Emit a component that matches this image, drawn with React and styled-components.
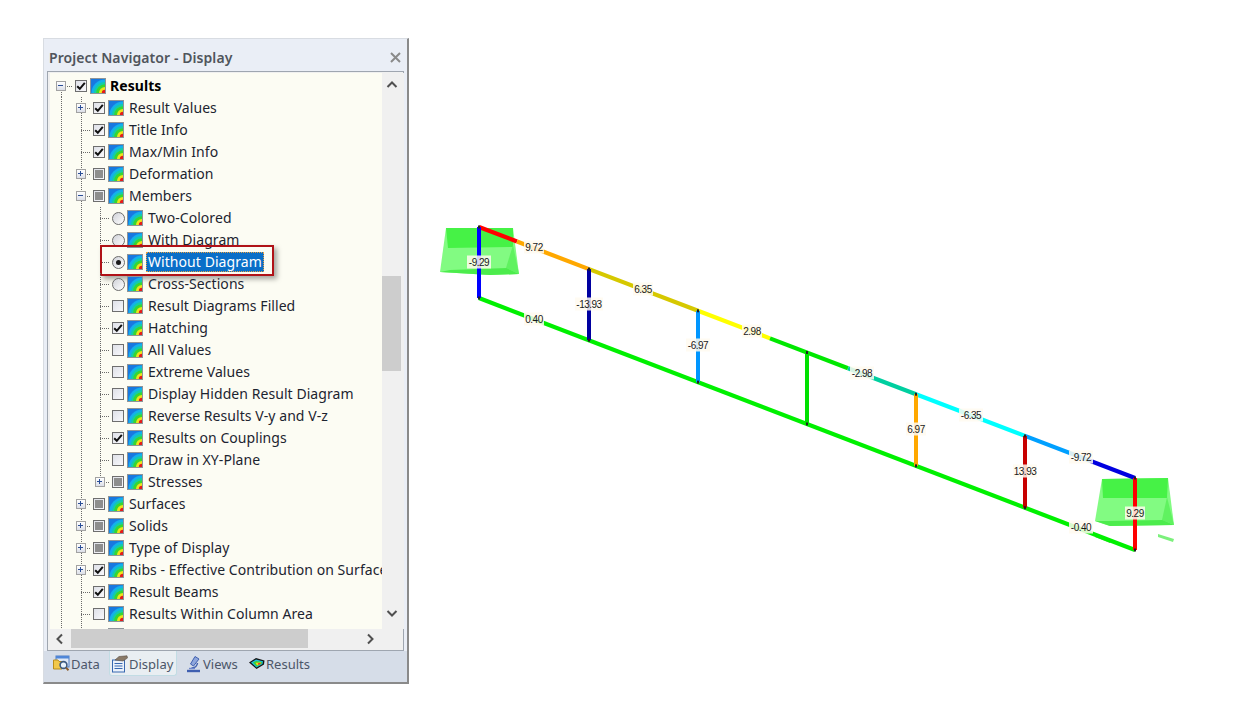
import React from 'react';
import styled, { createGlobalStyle } from 'styled-components';

const GlobalStyle = createGlobalStyle`
  html, body {
    margin: 0;
    padding: 0;
    background: #fff;
  }
`;

const rows = [
  { label: 'Results', level: 0, box: 'on', exp: 'minus', bold: true },
  { label: 'Result Values', level: 1, box: 'on', exp: 'plus' },
  { label: 'Title Info', level: 1, box: 'on' },
  { label: 'Max/Min Info', level: 1, box: 'on' },
  { label: 'Deformation', level: 1, box: 'mixed', exp: 'plus' },
  { label: 'Members', level: 1, box: 'mixed', exp: 'minus' },
  { label: 'Two-Colored', level: 2, box: 'radio' },
  { label: 'With Diagram', level: 2, box: 'radio' },
  { label: 'Without Diagram', level: 2, box: 'radioOn', selected: true },
  { label: 'Cross-Sections', level: 2, box: 'radio' },
  { label: 'Result Diagrams Filled', level: 2, box: 'off' },
  { label: 'Hatching', level: 2, box: 'on' },
  { label: 'All Values', level: 2, box: 'off' },
  { label: 'Extreme Values', level: 2, box: 'off' },
  { label: 'Display Hidden Result Diagram', level: 2, box: 'off' },
  { label: 'Reverse Results V-y and V-z', level: 2, box: 'off' },
  { label: 'Results on Couplings', level: 2, box: 'on' },
  { label: 'Draw in XY-Plane', level: 2, box: 'off' },
  { label: 'Stresses', level: 2, box: 'mixed', exp: 'plus', last: true },
  { label: 'Surfaces', level: 1, box: 'mixed', exp: 'plus' },
  { label: 'Solids', level: 1, box: 'mixed', exp: 'plus' },
  { label: 'Type of Display', level: 1, box: 'mixed', exp: 'plus' },
  { label: 'Ribs - Effective Contribution on Surfaces', level: 1, box: 'on', exp: 'plus' },
  { label: 'Result Beams', level: 1, box: 'on' },
  { label: 'Results Within Column Area', level: 1, box: 'off' },
  { label: '', level: 1, box: 'off' },
];

// top chord pieces, x from / x to / colour
const topChord = [
  [479, 517, '#ff0000'],
  [517, 589, '#ffa800'],
  [589, 698, '#d6c800'],
  [698, 770, '#ffff00'],
  [770, 848, '#00e800'],
  [848, 916, '#00cfa0'],
  [916, 1025, '#00ffff'],
  [1025, 1090, '#00a0ff'],
  [1090, 1135, '#0000e0'],
];

const posts = [
  [479, '#0000ff'],
  [589, '#0000a0'],
  [698, '#0096ff'],
  [807, '#00e000'],
  [916, '#ffa800'],
  [1025, '#c80000'],
  [1135, '#ff0000'],
];

const values = [
  ['9.72', 534, 247],
  ['6.35', 643, 289],
  ['2.98', 752, 331],
  ['-2.98', 862, 373],
  ['-6.35', 971, 415],
  ['-9.72', 1081, 457],
  ['-9.29', 479, 262],
  ['-13.93', 589, 304],
  ['-6.97', 698, 345],
  ['6.97', 916, 429],
  ['13.93', 1025, 471],
  ['9.29', 1135, 513],
  ['0.40', 534, 319],
  ['-0.40', 1081, 527],
];

const topY = (x) => 227 + (x - 479) * (251 / 656);
const bottomY = (x) => 298 + (x - 479) * (252 / 656);

function ResultIcon() {
  return (
    <IconBox viewBox="0 0 16 16">
      <rect width="16" height="16" fill="#1878e0" />
      <circle cx="15" cy="15" r="13.5" fill="#14b0ec" />
      <circle cx="15" cy="15" r="11" fill="#14cca8" />
      <circle cx="15" cy="15" r="8.8" fill="#38d630" />
      <circle cx="15" cy="15" r="6" fill="#ece41c" />
      <circle cx="15" cy="15" r="3.2" fill="#e41c1c" />
      <rect x="0.5" y="0.5" width="15" height="15" fill="none" stroke="#8e9498" />
    </IconBox>
  );
}

function Toggle({ box }) {
  if (box === 'radio') return <Radio />;
  if (box === 'radioOn') return <Radio><RadioDot /></Radio>;
  return (
    <Check>
      {box === 'mixed' && <CheckFill />}
      {box === 'on' && (
        <svg width="10" height="10" viewBox="0 0 10 10">
          <path d="M1.2 5.2 L3.8 7.8 L8.8 1.8" fill="none" stroke="#111" strokeWidth="2" />
        </svg>
      )}
    </Check>
  );
}

function Expander({ kind, at }) {
  return (
    <ExpBox $at={at}>
      <svg width="8" height="8" viewBox="0 0 8 8">
        <path d="M1 3.5 H6" stroke="#2b4f97" strokeWidth="1" fill="none" />
        {kind === 'plus' && <path d="M3.5 1 V6" stroke="#2b4f97" strokeWidth="1" fill="none" />}
      </svg>
    </ExpBox>
  );
}

function TreeRow({ row }) {
  const { label, level, box, exp, bold, selected, last } = row;
  return (
    <Row>
      {level === 0 && (
        <Branch $w={25} $at={11} $from="center">
          {exp && <Expander kind={exp} at={11} />}
        </Branch>
      )}
      {level === 1 && <Guide $w={17} $at={11} />}
      {level === 1 && (
        <Branch $w={26} $at={14}>
          {exp && <Expander kind={exp} at={14} />}
        </Branch>
      )}
      {level === 2 && <Guide $w={17} $at={11} />}
      {level === 2 && <Guide $w={20} $at={14} />}
      {level === 2 && (
        <Branch $w={25} $at={13} $from={last ? 'end' : undefined}>
          {exp && <Expander kind={exp} at={13} />}
        </Branch>
      )}
      <Toggle box={box} />
      <ResultIcon />
      <Label $bold={bold} $selected={selected}>{label}</Label>
      {selected && <Callout />}
    </Row>
  );
}

function Chevron({ d }) {
  return (
    <svg width="12" height="12" viewBox="0 0 12 12">
      <path d={d} fill="none" stroke="#505050" strokeWidth="2" />
    </svg>
  );
}

function DataIcon() {
  return (
    <TabGlyph width="18" height="18" viewBox="0 0 18 18">
      <rect x="3" y="1" width="13" height="11" fill="#dfe8f6" stroke="#4f7fc4" />
      <rect x="3" y="1" width="13" height="2.5" fill="#4f86d8" />
      <path d="M0.5 5 H5 L6 6.5 H9 V14 H0.5 Z" fill="#f2c84a" stroke="#b98d1c" />
      <circle cx="10.5" cy="10" r="3.4" fill="#e8f2fb" stroke="#3d5a80" strokeWidth="1.6" />
      <path d="M13 12.6 L15.5 15.2" stroke="#8a5a2a" strokeWidth="2" />
    </TabGlyph>
  );
}

function DisplayIcon() {
  return (
    <TabGlyph width="18" height="18" viewBox="0 0 18 18">
      <rect x="1.5" y="5" width="12" height="12" fill="#eaf1fb" stroke="#3868b0" />
      <path d="M3.5 8.5 H11.5 M3.5 11 H11.5 M3.5 13.5 H11.5" stroke="#3868b0" />
      <path d="M4 5 L8 1.5 L16 0.8 L16.5 3 L12 6 Z" fill="#8a7a68" stroke="#5a5048" strokeWidth="0.6" />
    </TabGlyph>
  );
}

function ViewsIcon() {
  return (
    <TabGlyph width="18" height="18" viewBox="-1 0 18 18">
      <path d="M9 1.5 L13 4 L7.5 11 L4.5 9 Z" fill="#8ea6dc" stroke="#3f5fb0" />
      <path d="M5.5 13 C8 13 11 11.5 11.5 8" fill="none" stroke="#3f5fb0" strokeWidth="1.5" />
      <path d="M1 16 H14" stroke="#3f5fb0" strokeWidth="2.4" />
      <path d="M3 13.5 H9" stroke="#6f88cc" strokeWidth="1.4" />
    </TabGlyph>
  );
}

function ResultsIcon() {
  return (
    <TabGlyph width="18" height="18" viewBox="0 0 18 18">
      <path d="M1 7.5 L8 3 L16.5 5.5 L16 9.5 L8.5 14 Z" fill="#141414" />
      <path d="M3 7.5 L8 4.5 L15 6.2 L14.5 9 L8.5 12.4 Z" fill="#1cc0e0" />
      <path d="M5 7.6 L8.2 6 L14 7 L13.6 8.8 L8.6 11.4 Z" fill="#38d038" />
      <path d="M7.5 7.8 L13 7.6 L12.8 8.8 L9 10.6 Z" fill="#f0d820" />
      <path d="M10 8.2 L12.8 8 L12.4 9 L10 9.8 Z" fill="#e82020" />
    </TabGlyph>
  );
}

function Support({ body, top, low, wedge }) {
  return (
    <g>
      <polygon points={body} fill="#82fb82" />
      <polygon points={top} fill="#46f246" />
      <polygon points={low} fill="#4cec4c" />
      <polygon points={wedge} fill="#60f260" />
    </g>
  );
}

function Drawing() {
  return (
    <Canvas viewBox="409 0 826 728" width="826" height="728">
      <Support
        body="446,228 513,228 519,274 490,275 440,272"
        top="446,228 513,228 513,247 448,248"
        low="450,270 507,268 519,274 490,275 440,272"
        wedge="513,245 519,274 506,268"
      />
      <Support
        body="1102,479 1168,478 1174,525 1110,526 1095,521"
        top="1102,479 1168,478 1167,498 1103,498"
        low="1108,521 1163,520 1174,525 1110,526 1095,521"
        wedge="1167,497 1174,525 1162,520"
      />
      <polygon points="1158,534 1174,539 1173,542 1158,537" fill="#7cf07c" />
      <polygon points="1095,533 1112,540 1110,543 1095,537" fill="#40d840" />

      <line x1="479" y1={bottomY(479)} x2="1135" y2={bottomY(1135)} stroke="#00f000" strokeWidth="4.2" />
      {topChord.map(([a, b, c]) => (
        <line key={a} x1={a} y1={topY(a)} x2={b} y2={topY(b)} stroke={c} strokeWidth="4.2" />
      ))}
      {posts.map(([x, c]) => (
        <g key={x}>
          <line x1={x} y1={topY(x)} x2={x} y2={bottomY(x)} stroke={c} strokeWidth="4" />
          <rect x={x - 1} y={topY(x) - 1.5} width="2" height="3" fill="#222" />
          <rect x={x - 1} y={bottomY(x) - 1.5} width="2" height="3" fill="#222" />
        </g>
      ))}
      {values.map(([t, x, y]) => {
        const w = t.length * 4 + 4;
        return (
          <g key={t}>
            <rect x={x - w / 2} y={y - 6.5} width={w} height="13" fill="#fffaf0" opacity="0.85" />
            <ValueText x={x} y={y + 3.5} textAnchor="middle">{t}</ValueText>
          </g>
        );
      })}
    </Canvas>
  );
}

export default function App() {
  return (
    <Page>
      <GlobalStyle />
      <Side>
        <Panel>
          <TitleBar>
            <Title>Project Navigator - Display</Title>
            <Close>
              <svg width="11" height="11" viewBox="0 0 11 11">
                <path d="M1 1 L10 10 M10 1 L1 10" stroke="#8a8a8a" strokeWidth="2" />
              </svg>
            </Close>
          </TitleBar>
          <Frame>
            <Upper>
              <Tree>
                {rows.map((r, i) => <TreeRow key={i} row={r} />)}
              </Tree>
              <VBar>
                <VButton><Chevron d="M1.5 8 L6 3.5 L10.5 8" /></VButton>
                <VThumb />
                <VButton $end><Chevron d="M1.5 4 L6 8.5 L10.5 4" /></VButton>
              </VBar>
            </Upper>
            <HBar>
              <HButton><Chevron d="M7 1.5 L2.5 6 L7 10.5" /></HButton>
              <HThumb />
              <HTrack />
              <HButton><Chevron d="M4 1.5 L8.5 6 L4 10.5" /></HButton>
            </HBar>
          </Frame>
          <Tabs>
            <Tab $w={60} $pad={3}><DataIcon />Data</Tab>
            <Tab $w={68} $pad={1} $active><DisplayIcon />Display</Tab>
            <Tab $w={70} $pad={7}><ViewsIcon />Views</Tab>
            <Tab $w={70} $pad={0}><ResultsIcon />Results</Tab>
          </Tabs>
        </Panel>
      </Side>
      <Drawing />
    </Page>
  );
}

const Page = styled.div`
  display: flex;
  align-items: flex-start;
  width: 1235px;
  height: 728px;
  overflow: hidden;
  font-family: "Noto Sans", "Open Sans", sans-serif;
`;

const Side = styled.div`
  flex: none;
  padding: 38px 0 0 43px;
`;

const Panel = styled.div`
  box-sizing: border-box;
  width: 366px;
  height: 646px;
  display: flex;
  flex-direction: column;
  background: #eaeef6;
  border: 1px solid #d8dce2;
  border-right: 2px solid #8a8a8a;
  border-bottom: 2px solid #8a8a8a;
`;

const TitleBar = styled.div`
  flex: none;
  height: 32px;
  display: flex;
  align-items: center;
  justify-content: space-between;
  padding: 4px 6px 0 5px;
  box-sizing: border-box;
`;

const Title = styled.div`
  font-size: 14px;
  font-weight: 600;
  letter-spacing: 0.08px;
  color: #50555c;
  white-space: nowrap;
`;

const Close = styled.div`
  display: flex;
  width: 11px;
  height: 11px;
`;

const Frame = styled.div`
  flex: none;
  margin: 0 3px;
  height: 580px;
  box-sizing: border-box;
  display: flex;
  flex-direction: column;
  background: #f0f0f0;
  border: 1px solid #9fa6b0;
  padding: 1px 0 1px 2px;
`;

const Upper = styled.div`
  flex: none;
  height: 556px;
  display: flex;
`;

const Tree = styled.div`
  flex: none;
  width: 332px;
  height: 556px;
  box-sizing: border-box;
  padding-top: 2px;
  overflow: hidden;
  background: #fcfcf3;
`;

const Row = styled.div`
  position: relative;
  display: flex;
  align-items: center;
  height: 22px;
  white-space: nowrap;
`;

const dots = 'repeating-linear-gradient(to bottom, #6a6a6a 0 1px, transparent 1px 2px)';
const dotsH = 'repeating-linear-gradient(to right, #6a6a6a 0 1px, transparent 1px 2px)';

const Guide = styled.div`
  flex: none;
  width: ${(p) => p.$w}px;
  height: 22px;
  background-image: ${dots};
  background-size: 1px 100%;
  background-position: ${(p) => p.$at}px 0;
  background-repeat: no-repeat;
`;

const Branch = styled.div`
  flex: none;
  display: flex;
  align-items: center;
  width: ${(p) => p.$w}px;
  height: 22px;
  background-image: ${dots}, ${dotsH};
  background-size: 1px ${(p) => (p.$from ? '11px' : '100%')}, ${(p) => p.$w - p.$at - 2}px 1px;
  background-position: ${(p) => p.$at}px ${(p) => (p.$from === 'center' ? '11px' : '0')}, ${(p) => p.$at}px 11px;
  background-repeat: no-repeat;
`;

const ExpBox = styled.div`
  box-sizing: border-box;
  width: 10px;
  height: 10px;
  margin-left: ${(p) => p.$at - 5}px;
  border: 1px solid #a2a2a2;
  background: linear-gradient(#ffffff, #dcdfe8);
  display: flex;
  svg { display: block; flex: none; }
`;

const Check = styled.div`
  flex: none;
  box-sizing: border-box;
  width: 12px;
  height: 12px;
  margin-right: 3px;
  border: 1px solid #6e6e6e;
  background: linear-gradient(135deg, #dfe1e8, #f8f8fb);
  display: flex;
  align-items: center;
  justify-content: center;
`;

const CheckFill = styled.div`
  width: 8px;
  height: 8px;
  background: #8e8e8e;
`;

const Radio = styled.div`
  flex: none;
  box-sizing: border-box;
  width: 13px;
  height: 13px;
  margin-right: 2px;
  border: 1px solid #6c6c6c;
  border-radius: 50%;
  background: linear-gradient(135deg, #cfd1d8, #ffffff);
  display: flex;
  align-items: center;
  justify-content: center;
`;

const RadioDot = styled.div`
  width: 5px;
  height: 5px;
  border-radius: 50%;
  background: #1a1a1a;
`;

const IconBox = styled.svg`
  flex: none;
  display: block;
  width: 16px;
  height: 16px;
`;

const Label = styled.span`
  margin-left: ${(p) => (p.$selected ? '3px' : p.$bold ? '4px' : '5px')};
  padding: ${(p) => (p.$selected ? '0 2px' : '0')};
  font-size: 14px;
  letter-spacing: 0.06px;
  line-height: 20px;
  font-weight: ${(p) => (p.$bold ? 700 : 400)};
  color: ${(p) => (p.$selected ? '#fff' : p.$bold ? '#000' : '#1c2430')};
  background: ${(p) => (p.$selected ? '#0a6fc8' : 'transparent')};
  outline: ${(p) => (p.$selected ? '1px dotted #e8a040' : 'none')};
  outline-offset: -1px;
`;

const Callout = styled.div`
  position: absolute;
  left: 50px;
  top: -6px;
  width: 174px;
  height: 31px;
  box-sizing: border-box;
  border: 2px solid #b01218;
  box-shadow: 3px 3px 5px rgba(0, 0, 0, 0.35);
`;

const VBar = styled.div`
  flex: none;
  width: 22px;
  display: flex;
  flex-direction: column;
  background: #f0f0f0;
`;

const VButton = styled.div`
  flex: none;
  width: 19px;
  height: 24px;
  margin-top: ${(p) => (p.$end ? 'auto' : '0')};
  margin-bottom: ${(p) => (p.$end ? '4px' : '0')};
  display: flex;
  align-items: center;
  justify-content: center;
`;

const VThumb = styled.div`
  flex: none;
  width: 19px;
  height: 95px;
  margin-top: 179px;
  background: #cdcdcd;
`;

const HBar = styled.div`
  flex: none;
  height: 19px;
  display: flex;
  width: 330px;
`;

const HButton = styled.div`
  flex: none;
  width: 21px;
  display: flex;
  align-items: center;
  justify-content: center;
`;

const HThumb = styled.div`
  flex: none;
  width: 237px;
  background: #cdcdcd;
`;

const HTrack = styled.div`
  flex: 1;
`;

const Tabs = styled.div`
  flex: 1;
  display: flex;
  align-items: stretch;
  padding: 0 0 6px 5px;
  background: #d6dde8;
`;

const Tab = styled.div`
  flex: none;
  box-sizing: border-box;
  width: ${(p) => p.$w}px;
  display: flex;
  align-items: center;
  padding-left: ${(p) => p.$pad}px;
  padding-top: 2px;
  font-size: 13px;
  color: #4c5668;
  background: ${(p) => (p.$active ? '#e9eef2' : 'transparent')};
  border: ${(p) => (p.$active ? '1px solid #c2dce4' : '1px solid transparent')};
  border-top: none;
  border-radius: 0 0 3px 3px;
`;

const TabGlyph = styled.svg`
  flex: none;
  display: block;
`;

const Canvas = styled.svg`
  flex: none;
  display: block;
`;

const ValueText = styled.text`
  font-family: "Liberation Sans", Arial, sans-serif;
  font-size: 10px;
  letter-spacing: -0.5px;
  fill: #1a1a1a;
`;
